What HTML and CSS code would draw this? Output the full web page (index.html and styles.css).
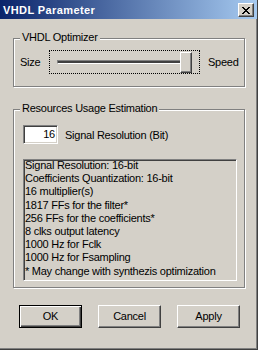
FILE: index.html
```html
<!DOCTYPE html>
<html>
<head>
<meta charset="utf-8">
<link rel="stylesheet" href="styles.css">
</head>
<body>
<div class="window">
  <div class="titlebar">
    <span class="title">VHDL Parameter</span>
    <div class="close">
      <svg width="8" height="7" viewBox="0 0 8 7"><path d="M0 0h2v1H0zM6 0h2v1H6zM1 1h2v1H1zM5 1h2v1H5zM2 2h4v1H2zM3 3h2v1H3zM2 4h4v1H2zM1 5h2v1H1zM5 5h2v1H5zM0 6h2v1H0zM6 6h2v1H6z" fill="#000"/></svg>
    </div>
  </div>
  <div class="client">
    <div class="group g1">
      <span class="legend">VHDL Optimizer</span>
      <div class="slider-row">
        <span class="lbl-size">Size</span>
        <div class="slider">
          <div class="track"></div>
          <div class="thumb"></div>
        </div>
        <span class="lbl-speed">Speed</span>
      </div>
    </div>
    <div class="group g2">
      <span class="legend">Resources Usage Estimation</span>
      <div class="res-row">
        <div class="edit">16</div>
        <span class="res-label">Signal Resolution (Bit)</span>
      </div>
      <div class="info">
        <div class="lines">
          <div>Signal Resolution: 16-bit</div>
          <div>Coefficients Quantization: 16-bit</div>
          <div>16 multiplier(s)</div>
          <div>1817 FFs for the filter*</div>
          <div>256 FFs for the coefficients*</div>
          <div>8 clks output latency</div>
          <div>1000 Hz for Fclk</div>
          <div>1000 Hz for Fsampling</div>
          <div>* May change with synthezis optimization</div>
        </div>
      </div>
    </div>
    <div class="buttons">
      <div class="btn default">OK</div>
      <div class="btn">Cancel</div>
      <div class="btn">Apply</div>
    </div>
  </div>
</div>
</body>
</html>
```

FILE: styles.css
```css
* { box-sizing: border-box; }

body {
  margin: 0;
  font-family: "Liberation Sans", Arial, sans-serif;
  font-size: 11px;
  letter-spacing: -0.25px;
  color: #000;
}

.window {
  width: 258px;
  height: 350px;
  background: #d4d0c8;
  display: flex;
  flex-direction: column;
  border-right: 1px solid #404040;
  border-bottom: 1px solid #404040;
  box-shadow: inset -1px -1px 0 #808080;
}

.titlebar {
  height: 19px;
  flex: none;
  background: linear-gradient(to right, #0a246a, #a6caf0);
  display: flex;
  align-items: flex-start;
  justify-content: space-between;
  padding: 0 3px 0 3px;
}

.title {
  color: #fff;
  font-weight: bold;
  letter-spacing: 0.4px;
  line-height: 17px;
  padding-top: 2px;
}

.close {
  width: 16px;
  height: 14px;
  margin-top: 3px;
  background: #d4d0c8;
  border: 1px solid;
  border-color: #fff #404040 #404040 #fff;
  box-shadow: inset -1px -1px 0 #808080;
  display: flex;
  align-items: center;
  justify-content: center;
}

.close svg { display: block; shape-rendering: crispEdges; }

.client {
  flex: 1;
  padding-left: 13px;
}

.group {
  position: relative;
  width: 232px;
  border: 1px solid #808080;
  box-shadow: inset 1px 1px 0 #fff, 1px 1px 0 #fff;
}

.g1 { margin-top: 19px; height: 49px; }
.g2 { margin-top: 22px; height: 179px; padding: 15px 0 0 8px; }

.legend {
  position: absolute;
  top: -8px;
  left: 6px;
  padding: 0 2px;
  background: #d4d0c8;
  line-height: 13px;
  white-space: nowrap;
}

.slider-row {
  display: flex;
  align-items: center;
  padding: 11px 0 0 6px;
}

.lbl-size { width: 29px; }

.slider {
  position: relative;
  width: 151px;
  height: 24px;
  border: 1px dotted #000;
  padding: 0 7px 0 7px;
  display: flex;
  align-items: center;
}

.track {
  flex: 1;
  height: 4px;
  background: #404040;
  border-style: solid;
  border-width: 1px;
  border-color: #808080 #fff #fff #808080;
}

.thumb {
  position: absolute;
  right: 7px;
  top: 1px;
  width: 12px;
  height: 21px;
  background: #d4d0c8;
  border: 1px solid;
  border-color: #fff #404040 #404040 #fff;
  box-shadow: inset -1px -1px 0 #808080;
}

.lbl-speed { margin-left: 8px; }

.res-row {
  display: flex;
  align-items: center;
  height: 19px;
  padding-left: 1px;
}

.edit {
  width: 35px;
  height: 19px;
  background: #fff;
  border: 1px solid;
  border-color: #808080 #fff #fff #808080;
  box-shadow: inset 1px 1px 0 #404040, inset -1px -1px 0 #d4d0c8;
  text-align: right;
  padding-right: 2px;
  line-height: 17px;
}

.res-label { margin-left: 7px; }

.info {
  margin-top: 15px;
  margin-left: 1px;
  width: 214px;
  height: 122px;
  border: 1px solid;
  border-color: #808080 #fff #fff #808080;
  box-shadow: inset 1px 1px 0 #404040, inset -1px -1px 0 #d4d0c8;
  padding-left: 1px;
}

.lines {
  margin-top: -1px;
  line-height: 13.2px;
  white-space: nowrap;
}

.buttons {
  display: flex;
  gap: 16px;
  margin-top: 17px;
  padding-left: 6px;
}

.btn {
  width: 63px;
  height: 23px;
  background: #d4d0c8;
  border: 1px solid;
  border-color: #fff #404040 #404040 #fff;
  box-shadow: inset -1px -1px 0 #808080;
  text-align: center;
  line-height: 21px;
}

.btn.default {
  border-color: #000;
  box-shadow: inset 1px 1px 0 #fff, inset -1px -1px 0 #404040, inset -2px -2px 0 #808080;
}
```
